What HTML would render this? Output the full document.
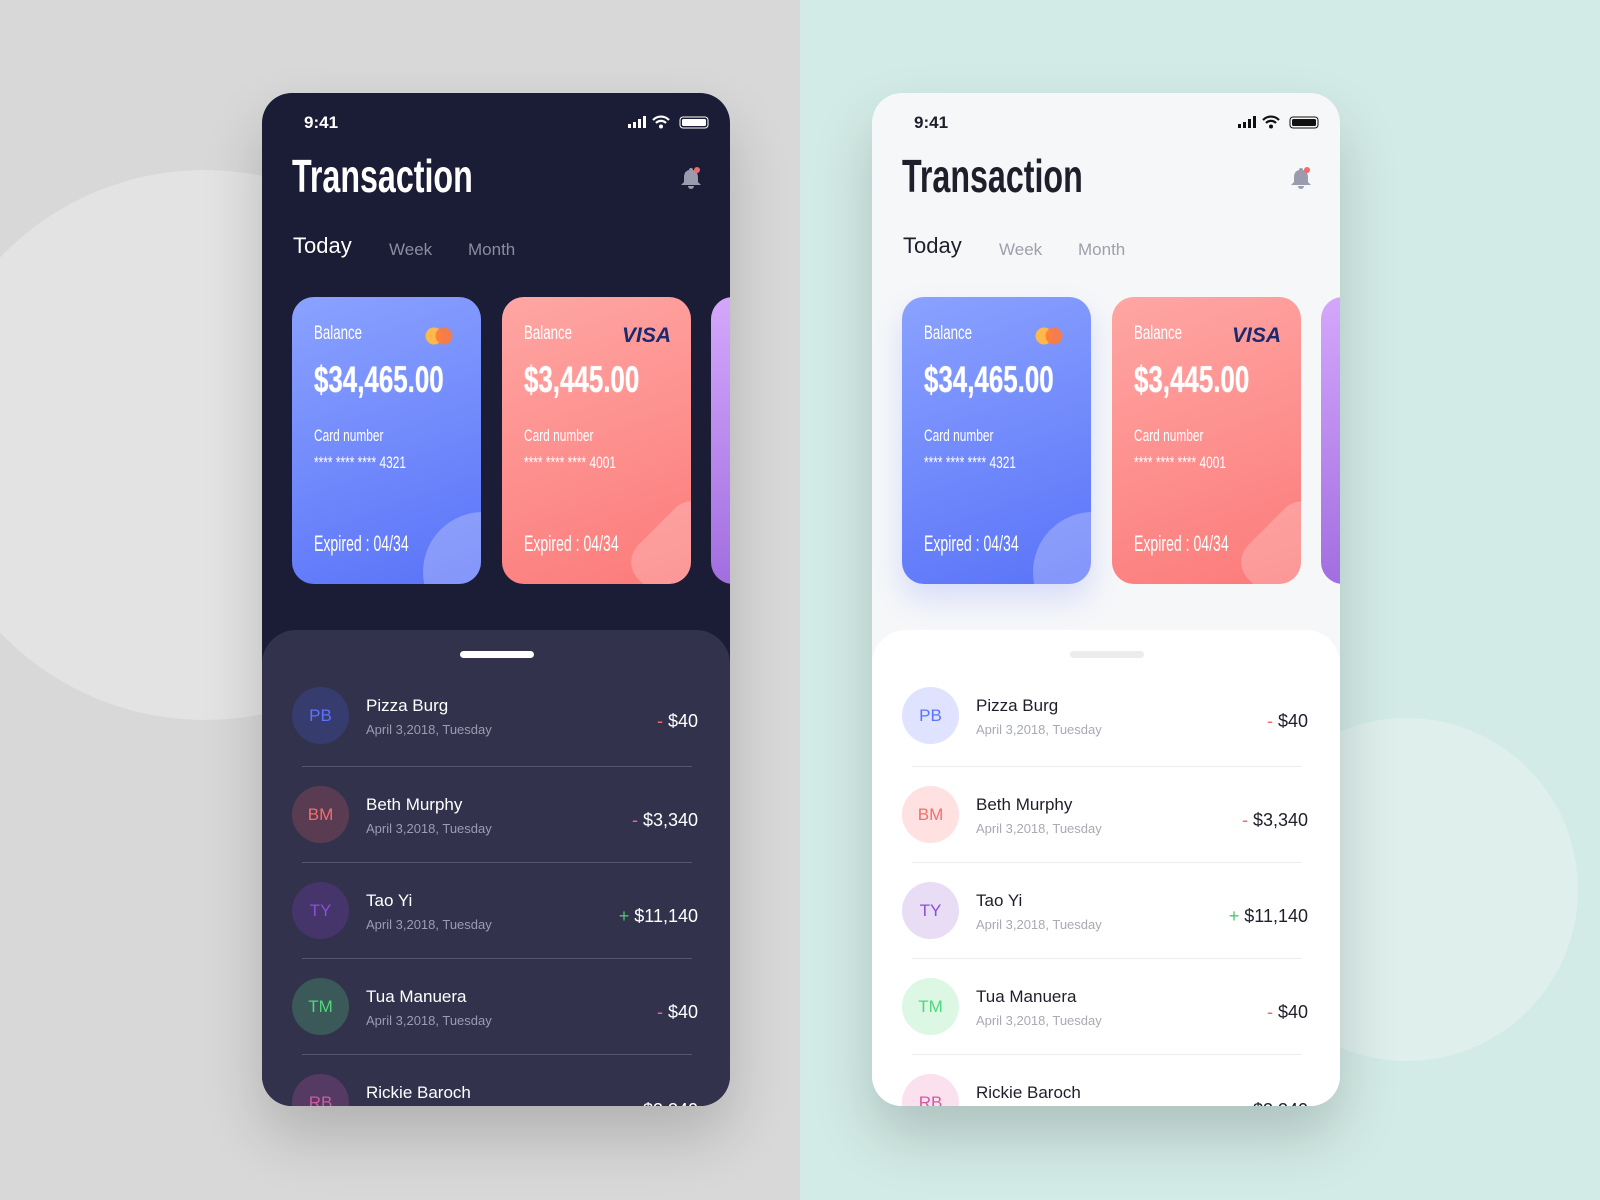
<!DOCTYPE html>
<html><head><meta charset="utf-8"><style>
*{margin:0;padding:0;box-sizing:border-box}
body{width:1600px;height:1200px;overflow:hidden;position:relative;font-family:"Liberation Sans",sans-serif;background:#d4ece8}
.lbg{position:absolute;left:0;top:0;width:800px;height:1200px;background:#d8d8d8;overflow:hidden}
.c1{position:absolute;left:-75px;top:170px;width:560px;height:550px;border-radius:50%;background:#e3e3e3}
.rbg{position:absolute;left:800px;top:0;width:800px;height:1200px;background:#d3ebe6;overflow:hidden}
.c2{position:absolute;left:435px;top:718px;width:343px;height:343px;border-radius:50%;background:#deefec}
.ph{position:absolute;top:93px;width:468px;height:1013px;border-radius:30px;overflow:hidden;box-shadow:0 30px 60px rgba(0,0,0,.18)}
.dark{left:262px;background:#1b1c35;color:#fff}
.light{left:872px;background:#f6f7f9;color:#1e1f2b}
.abs{position:absolute}
.n{transform-origin:0 0;white-space:nowrap}
.time{left:42px;top:20px;font-size:17px;font-weight:bold}
.title{left:30px;top:56px;font-weight:bold;font-size:46px;transform:scaleX(.7)}
.tab{top:140px;font-size:22px}
.tab2{top:147px;font-size:17px;color:#8a8ca0}
.light .tab2{color:#9ea0ab}
.card{position:absolute;top:204px;width:189px;height:287px;border-radius:22px;overflow:hidden;color:#fff}
.blue{background:linear-gradient(160deg,#8aa2ff,#5a73f8)}
.red{background:linear-gradient(160deg,#ffa6a3,#fb7b7a)}
.pur{background:linear-gradient(180deg,#d4a7fb,#a26ee0)}
.card .b{position:absolute;left:22px;top:26px;font-size:19px;transform:scaleX(.7)}
.card .a{position:absolute;left:22px;top:62px;font-size:37px;font-weight:bold;transform:scaleX(.7);text-shadow:0 0 1px #fff}
.card .cn{position:absolute;left:22px;top:129px;font-size:17px;transform:scaleX(.7)}
.card .st{position:absolute;left:22px;top:156px;font-size:17px;transform:scaleX(.7)}
.card .ex{position:absolute;left:22px;top:234px;font-size:22px;transform:scaleX(.64)}
.sheet{position:absolute;left:0;top:537px;width:468px;height:500px;border-radius:34px 34px 0 0}
.dark .sheet{background:#32324d}
.light .sheet{background:#fff}
.hdl{position:absolute;left:198px;top:21px;width:74px;height:7px;border-radius:4px}
.row{position:absolute;left:0;width:468px;height:96px}
.av{position:absolute;left:30px;top:0;width:57px;height:57px;border-radius:50%;text-align:center;line-height:57px;font-size:17px}
.nm{position:absolute;left:104px;top:9px;font-size:17px}
.dt{position:absolute;left:104px;top:35px;font-size:13px;color:#9b9cb0}
.light .dt{color:#a8aab4}
.am{position:absolute;right:32px;top:24px;font-size:18px}
.sep{position:absolute;left:40px;width:390px;height:1px}
.dark .sep{background:#55566f}.light .sep{background:#ececef}
.m{color:#f26a6a}.p{color:#4bc66b}
</style></head><body>
<div class="lbg"><div class="c1"></div></div>
<div class="rbg"><div class="c2"></div></div>

<!-- DARK -->
<div class="ph dark">
<div class="abs time">9:41</div>
<svg class="abs" style="left:366px;top:22px" width="84" height="16" viewBox="0 0 84 16"><rect x="0" y="9" width="3" height="4" fill="#fff"/><rect x="5" y="7" width="3" height="6" fill="#fff"/><rect x="10" y="4" width="3" height="9" fill="#fff"/><rect x="15" y="1" width="3" height="12" fill="#fff"/><path d="M25 5a11 11 0 0 1 16 0M28 8a7 7 0 0 1 10 0" stroke="#fff" stroke-width="2.2" fill="none"/><circle cx="33" cy="11.5" r="2" fill="#fff"/><rect x="52" y="2" width="28" height="11" rx="3" fill="none" stroke="#fff" stroke-width="1"/><rect x="54" y="4" width="24" height="7" rx="1.5" fill="#fff"/></svg>
<div class="abs n title">Transaction</div>
<svg class="abs" style="left:418px;top:72px" width="24" height="26" viewBox="0 0 24 26"><path d="M11 3a2 2 0 0 1 2 2c4 1 5 4 5 8v4l3 3H1l3-3v-4c0-4 1-7 5-8a2 2 0 0 1 2-2z" fill="#9a9cae"/><path d="M8 21a3 3 0 0 0 6 0z" fill="#9a9cae"/><circle cx="17" cy="5" r="3" fill="#f26a6a"/></svg>
<div class="abs tab" style="left:31px">Today</div>
<div class="abs tab2" style="left:127px">Week</div>
<div class="abs tab2" style="left:206px">Month</div>
<div class="card blue" style="left:30px"><div class="n b">Balance</div><svg class="abs" style="left:133px;top:30px" width="28" height="18"><circle cx="9" cy="9" r="8.5" fill="#ffb84a"/><circle cx="19" cy="9" r="8.5" fill="#ff7a3a" opacity=".9"/></svg><div class="n a">$34,465.00</div><div class="n cn">Card number</div><div class="n st">**** **** **** 4321</div><div class="n ex">Expired : 04/34</div><div class="abs" style="left:131px;top:215px;width:120px;height:120px;border-radius:50%;background:rgba(255,255,255,.25)"></div></div>
<div class="card red" style="left:240px"><div class="n b">Balance</div><div class="abs" style="left:120px;top:27px;font-style:italic;font-weight:bold;font-size:21px;color:#1b2a6e">VISA</div><div class="n a">$3,445.00</div><div class="n cn">Card number</div><div class="n st">**** **** **** 4001</div><div class="n ex">Expired : 04/34</div><div class="abs" style="left:140px;top:215px;width:100px;height:100px;border-radius:24px;transform:rotate(45deg);background:rgba(255,255,255,.22)"></div></div>
<div class="card pur" style="left:449px"></div>
<div class="sheet"><div class="hdl" style="background:#fff"></div>
<div class="row" style="top:57px"><div class="av" style="background:#363c6e;color:#5d72ff">PB</div><div class="nm">Pizza Burg</div><div class="dt">April 3,2018, Tuesday</div><div class="am"><span class="m">-</span> $40</div></div>
<div class="sep" style="top:136px"></div>
<div class="row" style="top:156px"><div class="av" style="background:#5a3c52;color:#f56d6d">BM</div><div class="nm">Beth Murphy</div><div class="dt">April 3,2018, Tuesday</div><div class="am"><span class="m">-</span> $3,340</div></div>
<div class="sep" style="top:232px"></div>
<div class="row" style="top:252px"><div class="av" style="background:#45356a;color:#8a4fd8">TY</div><div class="nm">Tao Yi</div><div class="dt">April 3,2018, Tuesday</div><div class="am"><span class="p">+</span> $11,140</div></div>
<div class="sep" style="top:328px"></div>
<div class="row" style="top:348px"><div class="av" style="background:#3b5958;color:#4fd87a">TM</div><div class="nm">Tua Manuera</div><div class="dt">April 3,2018, Tuesday</div><div class="am"><span class="m">-</span> $40</div></div>
<div class="sep" style="top:424px"></div>
<div class="row" style="top:444px"><div class="av" style="background:#553a63;color:#d25aa0">RB</div><div class="nm">Rickie Baroch</div><div class="am" style="top:26px">$3,340</div></div>
</div>
</div>

<!-- LIGHT -->
<div class="ph light">
<div class="abs time">9:41</div>
<svg class="abs" style="left:366px;top:22px" width="84" height="16" viewBox="0 0 84 16"><rect x="0" y="9" width="3" height="4" fill="#111"/><rect x="5" y="7" width="3" height="6" fill="#111"/><rect x="10" y="4" width="3" height="9" fill="#111"/><rect x="15" y="1" width="3" height="12" fill="#111"/><path d="M25 5a11 11 0 0 1 16 0M28 8a7 7 0 0 1 10 0" stroke="#111" stroke-width="2.2" fill="none"/><circle cx="33" cy="11.5" r="2" fill="#111"/><rect x="52" y="2" width="28" height="11" rx="3" fill="none" stroke="#111" stroke-width="1"/><rect x="54" y="4" width="24" height="7" rx="1.5" fill="#111"/></svg>
<div class="abs n title">Transaction</div>
<svg class="abs" style="left:418px;top:72px" width="24" height="26" viewBox="0 0 24 26"><path d="M11 3a2 2 0 0 1 2 2c4 1 5 4 5 8v4l3 3H1l3-3v-4c0-4 1-7 5-8a2 2 0 0 1 2-2z" fill="#9a9cae"/><path d="M8 21a3 3 0 0 0 6 0z" fill="#9a9cae"/><circle cx="17" cy="5" r="3" fill="#f26a6a"/></svg>
<div class="abs tab" style="left:31px">Today</div>
<div class="abs tab2" style="left:127px">Week</div>
<div class="abs tab2" style="left:206px">Month</div>
<div class="card blue" style="left:30px;box-shadow:0 15px 30px rgba(90,115,248,.2)"><div class="n b">Balance</div><svg class="abs" style="left:133px;top:30px" width="28" height="18"><circle cx="9" cy="9" r="8.5" fill="#ffb84a"/><circle cx="19" cy="9" r="8.5" fill="#ff7a3a" opacity=".9"/></svg><div class="n a">$34,465.00</div><div class="n cn">Card number</div><div class="n st">**** **** **** 4321</div><div class="n ex">Expired : 04/34</div><div class="abs" style="left:131px;top:215px;width:120px;height:120px;border-radius:50%;background:rgba(255,255,255,.25)"></div></div>
<div class="card red" style="left:240px"><div class="n b">Balance</div><div class="abs" style="left:120px;top:27px;font-style:italic;font-weight:bold;font-size:21px;color:#1b2a6e">VISA</div><div class="n a">$3,445.00</div><div class="n cn">Card number</div><div class="n st">**** **** **** 4001</div><div class="n ex">Expired : 04/34</div><div class="abs" style="left:140px;top:215px;width:100px;height:100px;border-radius:24px;transform:rotate(45deg);background:rgba(255,255,255,.22)"></div></div>
<div class="card pur" style="left:449px"></div>
<div class="sheet"><div class="hdl" style="background:#ececef"></div>
<div class="row" style="top:57px"><div class="av" style="background:#dfe3ff;color:#5d72ff">PB</div><div class="nm">Pizza Burg</div><div class="dt">April 3,2018, Tuesday</div><div class="am"><span class="m">-</span> $40</div></div>
<div class="sep" style="top:136px"></div>
<div class="row" style="top:156px"><div class="av" style="background:#ffe1e1;color:#f56d6d">BM</div><div class="nm">Beth Murphy</div><div class="dt">April 3,2018, Tuesday</div><div class="am"><span class="m">-</span> $3,340</div></div>
<div class="sep" style="top:232px"></div>
<div class="row" style="top:252px"><div class="av" style="background:#e9dcf5;color:#8a4fd8">TY</div><div class="nm">Tao Yi</div><div class="dt">April 3,2018, Tuesday</div><div class="am"><span class="p">+</span> $11,140</div></div>
<div class="sep" style="top:328px"></div>
<div class="row" style="top:348px"><div class="av" style="background:#dcf7e4;color:#4fd87a">TM</div><div class="nm">Tua Manuera</div><div class="dt">April 3,2018, Tuesday</div><div class="am"><span class="m">-</span> $40</div></div>
<div class="sep" style="top:424px"></div>
<div class="row" style="top:444px"><div class="av" style="background:#fbe1ee;color:#d25aa0">RB</div><div class="nm">Rickie Baroch</div><div class="am" style="top:26px">$3,340</div></div>
</div>
</div>
</body></html>
